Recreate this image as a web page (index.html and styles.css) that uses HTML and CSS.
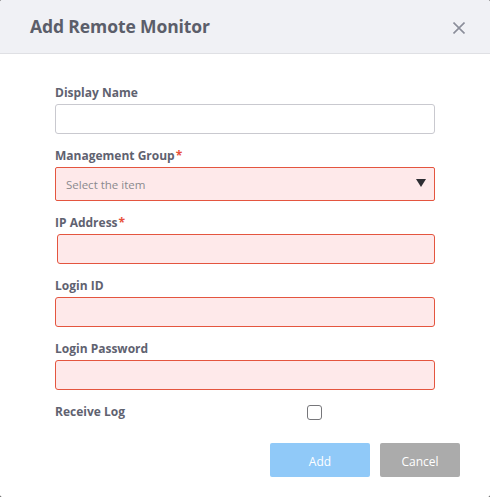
FILE: index.html
```html
<!DOCTYPE html>
<html lang="en">
<head>
<meta charset="utf-8">
<title>Add Remote Monitor</title>
<link rel="stylesheet" href="styles.css">
</head>
<body>
<div class="dialog">
  <header class="dialog-header">
    <h1 class="dialog-title">Add Remote Monitor</h1>
    <button class="close-btn" type="button" aria-label="Close">
      <svg width="12" height="12" viewBox="0 0 12 12"><path d="M0.5 0.5 L11.5 11.5 M11.5 0.5 L0.5 11.5" stroke="#8b8e9a" stroke-width="1.6" fill="none"/></svg>
    </button>
  </header>
  <form class="dialog-body">
    <div class="field">
      <label class="field-label">Display Name</label>
      <input class="text-input" type="text">
    </div>
    <div class="field">
      <label class="field-label">Management Group<span class="req">*</span></label>
      <div class="select invalid">
        <span class="select-placeholder">Select the item</span>
        <span class="select-caret"></span>
      </div>
    </div>
    <div class="field">
      <label class="field-label">IP Address<span class="req">*</span></label>
      <input class="text-input invalid shift" type="text">
    </div>
    <div class="field">
      <label class="field-label">Login ID</label>
      <input class="text-input invalid" type="text">
    </div>
    <div class="field">
      <label class="field-label">Login Password</label>
      <input class="text-input invalid" type="password">
    </div>
    <div class="check-row">
      <span class="field-label check-label">Receive Log</span>
      <span class="checkbox"></span>
    </div>
  </form>
  <footer class="dialog-footer">
    <button class="btn btn-add" type="button">Add</button>
    <button class="btn btn-cancel" type="button">Cancel</button>
  </footer>
</div>
</body>
</html>
```
FILE: styles.css
```css
html, body {
  margin: 0;
  padding: 0;
  background: #3a3a3a;
}

body {
  font-family: "Open Sans", "Noto Sans", sans-serif;
}

.dialog {
  width: 490px;
  height: 497px;
  background: #ffffff;
  border-radius: 2px;
  overflow: hidden;
  box-sizing: border-box;
}

.dialog-header {
  height: 54px;
  box-sizing: border-box;
  background: #f0f1f5;
  border-bottom: 1px solid #dfe0e4;
  display: flex;
  align-items: center;
  justify-content: space-between;
  padding: 0 24px 0 30px;
}

.dialog-title {
  margin: 0;
  font-size: 17.5px;
  font-weight: 700;
  color: #5b5e6a;
  letter-spacing: -0.1px;
  padding-bottom: 1px;
}

.close-btn {
  border: 0;
  background: transparent;
  padding: 0;
  width: 14px;
  height: 14px;
  display: flex;
  align-items: center;
  justify-content: center;
  margin-top: 3px;
}

.dialog-body {
  margin: 0;
  padding: 17px 55px 0 55px;
}

.field {
  margin-top: 13px;
}

.field-label {
  display: block;
  height: 18px;
  line-height: 18px;
  margin-bottom: 2px;
  font-size: 12px;
  font-weight: 700;
  color: #5f6270;
}

.req {
  color: #e8503a;
  margin-left: 1px;
}

.text-input {
  display: block;
  width: 100%;
  height: 30px;
  box-sizing: border-box;
  margin: 0;
  border: 1px solid #c9c9cf;
  border-radius: 3px;
  background: #ffffff;
  outline: none;
}

.text-input.shift {
  width: 378px;
  margin-left: 2px;
}

.invalid {
  background: #fee9ea;
  border: 1px solid #e4553f;
}

.select {
  height: 34px;
  box-sizing: border-box;
  border-radius: 2px;
  display: flex;
  align-items: center;
  justify-content: space-between;
  padding: 0 8px 0 10px;
}

.select-placeholder {
  font-size: 11.5px;
  color: #8a8a8e;
  padding-top: 1px;
}

.select-caret {
  width: 0;
  height: 0;
  border-left: 5.5px solid transparent;
  border-right: 5.5px solid transparent;
  border-top: 8px solid #2e2e33;
  margin-top: -3px;
}

.check-row {
  display: flex;
  align-items: center;
  margin-top: 13px;
  height: 18px;
}

.check-label {
  width: 252px;
  margin: 0;
}

.checkbox {
  width: 15px;
  height: 15px;
  box-sizing: border-box;
  border: 1px solid #76767a;
  border-radius: 3px;
  background: #fff;
}

.dialog-footer {
  display: flex;
  justify-content: flex-end;
  gap: 10px;
  padding: 22px 30px 0 0;
}

.btn {
  height: 34px;
  border: 0;
  border-radius: 2px;
  color: #ffffff;
  font-family: "Open Sans", "Noto Sans", sans-serif;
  font-size: 12px;
  padding: 2px 0 0;
}

.btn-add {
  width: 100px;
  background: #90c9f8;
}

.btn-cancel {
  width: 80px;
  background: #ababab;
}
```
